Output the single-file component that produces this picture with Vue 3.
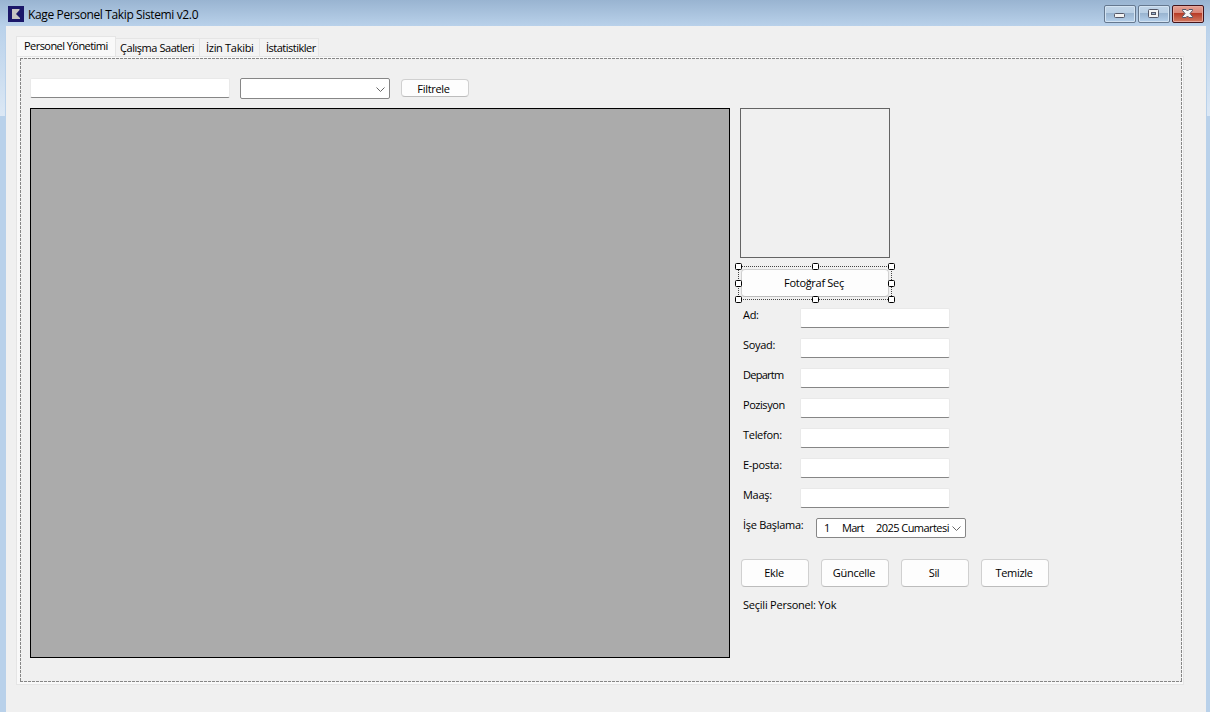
<template>
  <div class="window">
    <header class="title-bar">
      <svg class="app-icon" width="16" height="16" viewBox="0 0 16 16">
        <rect width="16" height="16" fill="#1b1769" />
        <path d="M4 3h7.500v1L8 8l4 4v1H4z" fill="#c6c4c2" />
      </svg>
      <span class="title">Kage Personel Takip Sistemi v2.0</span>
      <div class="caption-buttons">
        <button class="caption-button">
          <svg width="30" height="16" viewBox="0 0 30 16">
            <rect x="9.5" y="7.5" width="10" height="4" rx="1" fill="#f3f3f3" stroke="#535666" />
          </svg>
        </button>
        <button class="caption-button">
          <svg width="30" height="16" viewBox="0 0 30 16">
            <rect x="9.5" y="3.5" width="10" height="8" rx="1" fill="#f3f3f3" stroke="#535666" />
            <rect x="12.5" y="6.5" width="4" height="2" fill="#9ab4d0" stroke="#535666" />
          </svg>
        </button>
        <button class="caption-button close">
          <svg width="30" height="16" viewBox="0 0 30 16">
            <path d="M9.500 3.500h3.500l1.500 1.500 1.500-1.500h3.500v1l-2.500 3 2.500 3v1h-3.500l-1.500-1.500-1.500 1.500h-3.500v-1l2.500-3-2.500-3z"
              fill="#f3f3f3" stroke="#535666" />
          </svg>
        </button>
      </div>
    </header>

    <div class="frame">
      <div class="edge left"></div>
      <main class="client">
        <nav class="tabs">
          <button v-for="(tab, index) in tabs" :key="tab" :class="['tab', 'tab-' + index, { active: index === activeTab }]"
            @click="activeTab = index">
            {{ tab }}
          </button>
        </nav>

        <section class="tab-control">
          <div class="tab-page">
            <div class="filter-row">
              <input v-model="search" class="text-box search" />
              <div class="combo">
                <svg class="chevron" width="9" height="6" viewBox="0 0 9 6">
                  <path d="M.5 .5l4 4 4-4" />
                </svg>
              </div>
              <button class="button filter">Filtrele</button>
            </div>

            <div class="content">
              <div class="grid"></div>

              <aside class="details">
                <div class="photo"></div>

                <!-- seçili kontrol -->
                <div class="selection">
                  <button class="button photo-button">Fotoğraf Seç</button>
                  <svg class="handles" width="161" height="41" viewBox="0 0 161 41">
                    <rect class="dotted" x="4.500" y="4.500" width="153" height="33" />
                    <rect v-for="(h, i) in handles" :key="i" class="handle" :x="h.x" :y="h.y" width="6" height="6"
                      rx="1" />
                  </svg>
                </div>

                <div class="fields">
                  <div v-for="field in fields" :key="field" class="field">
                    <label>{{ field }}</label>
                    <input class="text-box" />
                  </div>
                </div>

                <div class="date-row">
                  <label>İşe Başlama:</label>
                  <div class="date-picker">
                    <span class="day">1</span>
                    <span class="month">Mart</span>
                    <span class="year">2025 Cumartesi</span>
                    <svg class="chevron" width="9" height="6" viewBox="0 0 9 6">
                      <path d="M.5 .5l4 4 4-4" />
                    </svg>
                  </div>
                </div>

                <div class="actions">
                  <button v-for="action in actions" :key="action" class="button">{{ action }}</button>
                </div>

                <p class="status">Seçili Personel: Yok</p>
              </aside>
            </div>
          </div>
        </section>
      </main>
      <div class="edge right"></div>
    </div>
  </div>
</template>

<script setup>
import { ref } from 'vue';

const tabs = ['Personel Yönetimi', 'Çalışma Saatleri', 'İzin Takibi', 'İstatistikler'];
const fields = ['Ad:', 'Soyad:', 'Departm', 'Pozisyon', 'Telefon:', 'E-posta:', 'Maaş:'];
const actions = ['Ekle', 'Güncelle', 'Sil', 'Temizle'];

const activeTab = ref(0);
const search = ref('');

// seçim çerçevesinin tutamaçları
const handles = [
  { x: 1.5, y: 1.5 }, { x: 78.5, y: 1.5 }, { x: 154.5, y: 1.5 },
  { x: 1.5, y: 18.5 }, { x: 154.5, y: 18.5 },
  { x: 1.5, y: 34.5 }, { x: 78.5, y: 34.5 }, { x: 154.5, y: 34.5 },
];
</script>

<style>
body {
  margin: 0;
  overflow: hidden;
}
</style>

<style scoped>
* {
  box-sizing: border-box;
}

.window {
  width: 1210px;
  height: 712px;
  display: flex;
  flex-direction: column;
  background: #b9d1ea;
  font-family: "Open Sans", "Noto Sans", sans-serif;
  font-size: 11px;
  letter-spacing: -0.3px;
  color: #000;
}

button,
input {
  font: inherit;
  letter-spacing: inherit;
  color: inherit;
  padding: 0;
  margin: 0;
  outline: none;
}

/* başlık çubuğu */
.title-bar {
  height: 26px;
  flex: none;
  display: flex;
  padding: 0 6px 0 8px;
  background: linear-gradient(#99b4d1, #b9d1ea);
}

.app-icon {
  margin-top: 6px;
}

.title {
  margin: 5px 0 0 4px;
  line-height: 20px;
  font-size: 12px;
  letter-spacing: -0.37px;
}

.caption-buttons {
  display: flex;
  gap: 2px;
  margin: 5px 0 0 auto;
}

.caption-button {
  width: 32px;
  height: 18px;
  display: flex;
  border: 1px solid #65788f;
  border-radius: 2px;
  background: linear-gradient(#c0d4e8 0, #b9cfe4 44%, #98b3cf 45%, #b5d0eb 100%);
  box-shadow: inset 0 0 0 1px #d3e3f2;
}

.caption-button.close {
  border-color: #43141b;
  background: linear-gradient(#e5a093 0, #d88475 44%, #b73a25 45%, #d27b62 100%);
  box-shadow: inset 0 0 0 1px #e6a89c;
}

.frame {
  flex: 1;
  display: flex;
}

.edge {
  background: linear-gradient(#b9d1ea, #dce8f5) no-repeat 0 0 / 100% 90px, #b9d1ea;
}

.edge.left {
  width: 6px;
  border-right: 1px solid #b9d1ea;
}

.edge.right {
  width: 4px;
  border-left: 1px solid #b9d1ea;
}

.client {
  flex: 1;
  padding: 10px 22px 0 10px;
  background: #f0f0f0;
}

/* sekmeler */
.tabs {
  height: 20px;
  display: flex;
  align-items: flex-end;
}

.tab {
  height: 18px;
  border: 1px solid #e5e5e5;
  border-width: 1px 1px 0 0;
  background: #f3f3f3;
  line-height: 18px;
  text-align: left;
  white-space: nowrap;
}

.tab.active {
  height: 20px;
  border-left-width: 1px;
  background: #f9f9f9;
}

.tab-0 {
  width: 100px;
  padding: 0 0 2px 7px;
  letter-spacing: -0.55px;
}

.tab-1 {
  width: 84px;
  padding-left: 4px;
  letter-spacing: -0.45px;
}

.tab-2 {
  width: 60px;
  padding-left: 6px;
}

.tab-3 {
  width: 59px;
  padding-left: 6px;
  letter-spacing: -0.5px;
}

.tab-control {
  width: 1168px;
  height: 629px;
  padding: 1px 1px 2px 3px;
  border: 1px solid #e5e5e5;
  background: #f9f9f9;
}

.tab-page {
  height: 624px;
  width: 1162px;
  padding: 20px 0 0 10px;
  background:
    repeating-linear-gradient(90deg, #868686 0 3px, transparent 3px 4px) 0 0 / 100% 1px no-repeat,
    repeating-linear-gradient(90deg, #868686 0 3px, transparent 3px 4px) 0 100% / 100% 1px no-repeat,
    repeating-linear-gradient(#868686 0 3px, transparent 3px 4px) 0 0 / 1px 100% no-repeat,
    repeating-linear-gradient(#868686 0 3px, transparent 3px 4px) 100% 0 / 1px 100% no-repeat,
    #f0f0f0;
}

.filter-row {
  height: 30px;
  display: flex;
  align-items: flex-start;
}

.text-box {
  width: 150px;
  height: 20px;
  border: 1px solid #e9e9e9;
  border-bottom-color: #868686;
  border-radius: 2px;
  background: #fff;
}

.search {
  width: 200px;
}

.combo,
.date-picker {
  width: 150px;
  height: 21px;
  display: flex;
  align-items: center;
  border: 1px solid #868686;
  border-radius: 2px;
  background: #fff;
}

.combo {
  margin: 0 11px 0 10px;
}

.chevron {
  flex: none;
  margin: 2px 4px 0 auto;
}

.chevron path {
  fill: none;
  stroke: #666;
}

.button {
  width: 68px;
  height: 28px;
  padding: 0 2px 2px 0;
  border: 1px solid #d0d0d0;
  border-bottom-color: #bcbcbc;
  border-radius: 4px;
  background: #fdfdfd;
  text-align: center;
}

.button.filter {
  height: 18px;
  margin-top: 1px;
  padding: 1px 3px 0 0;
  line-height: 16px;
}

.content {
  display: flex;
  gap: 10px;
}

.grid {
  width: 700px;
  height: 550px;
  border: 1px solid #000;
  background: #ababab;
}

.photo {
  width: 150px;
  height: 150px;
  border: 1px solid #646464;
}

.selection {
  position: relative;
  height: 50px;
  padding: 11px 0 0 1px;
}

.photo-button {
  width: 148px;
}

.handles {
  position: absolute;
  left: -6px;
  top: 4px;
}

.dotted {
  fill: none;
  stroke: #444;
  stroke-dasharray: 1 1;
  stroke-dashoffset: 0.5;
}

.handle {
  fill: #fff;
  stroke: #000;
}

.field {
  height: 30px;
  display: flex;
}

.field label {
  width: 60px;
  padding-left: 3px;
  line-height: 13px;
}

.field:nth-child(3) label {
  letter-spacing: -0.75px;
}

.field:nth-child(4) label {
  letter-spacing: -0.45px;
}

.date-row {
  display: flex;
}

.date-row label {
  width: 76px;
  padding-left: 3px;
  line-height: 13px;
}

.date-picker {
  height: 20px;
  padding-left: 7px;
  line-height: 16px;
}

.date-picker span {
  margin-bottom: 1px;
}

.date-picker .chevron {
  margin-right: 4px;
}

.day {
  width: 18px;
}

.month {
  width: 34px;
  letter-spacing: -0.7px;
}

.year {
  white-space: nowrap;
  letter-spacing: -0.55px;
}

.actions {
  display: flex;
  gap: 12px;
  margin: 21px 0 0 1px;
}

.status {
  margin: 10px 0 0 3px;
  line-height: 16px;
  letter-spacing: -0.23px;
}
</style>
